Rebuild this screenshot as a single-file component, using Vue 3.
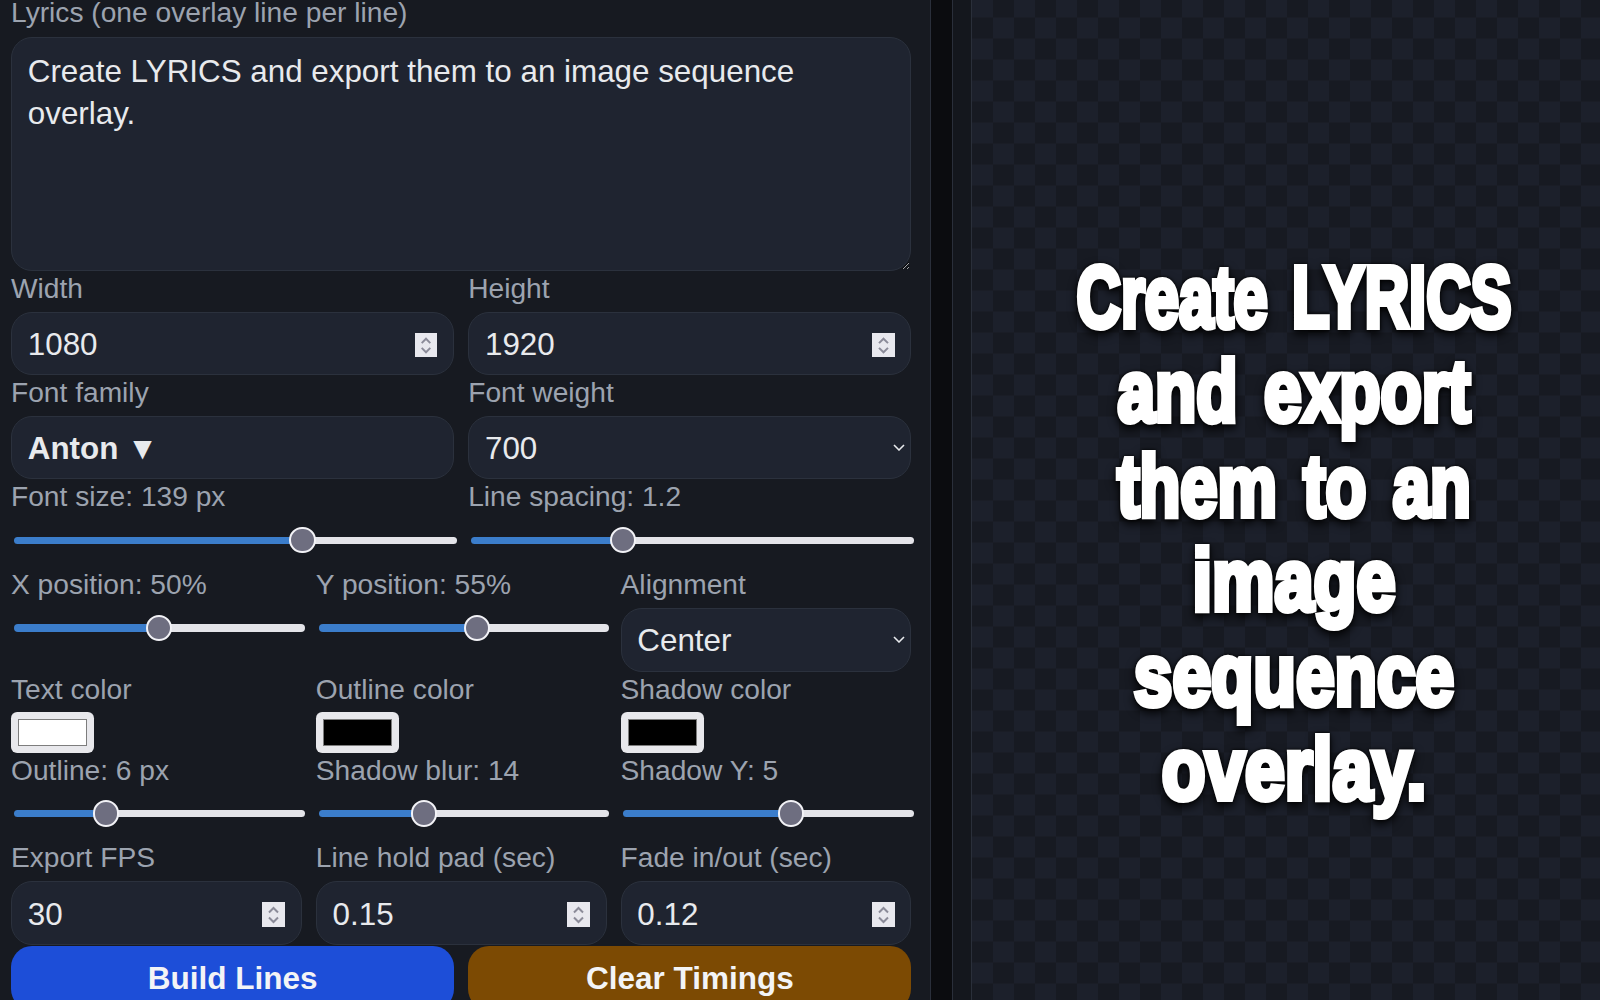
<script setup>
import { ref } from 'vue'

const lyrics = ref('Create LYRICS and export them to an image sequence overlay.')

const previewLines = [
  { text: 'Create LYRICS', scale: 0.706 },
  { text: 'and export', scale: 0.776 },
  { text: 'them to an', scale: 0.769 },
  { text: 'image', scale: 0.808 },
  { text: 'sequence', scale: 0.798 },
  { text: 'overlay.', scale: 0.821 }
]

const fill = (value, min, max) => ({ '--frac': (value - min) / (max - min) })
</script>

<template>
  <div class="app">
    <aside class="panel">
      <div class="controls">
        <label class="field">
          <span class="label first">Lyrics (one overlay line per line)</span>
          <textarea class="box lyrics" v-model="lyrics"></textarea>
        </label>

        <div class="row two">
          <label class="field">
            <span class="label">Width</span>
            <input class="box" type="number" value="1080" />
          </label>
          <label class="field">
            <span class="label">Height</span>
            <input class="box" type="number" value="1920" />
          </label>
          <div class="field">
            <span class="label">Font family</span>
            <button class="box font-btn" type="button">Anton ▼</button>
          </div>
          <label class="field">
            <span class="label">Font weight</span>
            <select class="box">
              <option>700</option>
            </select>
          </label>
          <label class="field">
            <span class="label">Font size: 139 px</span>
            <input class="range" type="range" min="20" max="200" value="139" :style="fill(139, 20, 200)" />
          </label>
          <label class="field">
            <span class="label">Line spacing: 1.2</span>
            <input class="range" type="range" min="0.8" max="2" step="0.05" value="1.2" :style="fill(1.2, 0.8, 2)" />
          </label>
        </div>

        <div class="row three">
          <label class="field">
            <span class="label">X position: 50%</span>
            <input class="range" type="range" min="0" max="100" value="50" :style="fill(50, 0, 100)" />
          </label>
          <label class="field">
            <span class="label">Y position: 55%</span>
            <input class="range" type="range" min="0" max="100" value="55" :style="fill(55, 0, 100)" />
          </label>
          <label class="field">
            <span class="label">Alignment</span>
            <select class="box">
              <option>Center</option>
            </select>
          </label>
          <label class="field">
            <span class="label">Text color</span>
            <input class="swatch" type="color" value="#ffffff" />
          </label>
          <label class="field">
            <span class="label">Outline color</span>
            <input class="swatch" type="color" value="#000000" />
          </label>
          <label class="field">
            <span class="label">Shadow color</span>
            <input class="swatch" type="color" value="#000000" />
          </label>
          <label class="field">
            <span class="label">Outline: 6 px</span>
            <input class="range" type="range" min="0" max="20" value="6" :style="fill(6, 0, 20)" />
          </label>
          <label class="field">
            <span class="label">Shadow blur: 14</span>
            <input class="range" type="range" min="0" max="40" value="14" :style="fill(14, 0, 40)" />
          </label>
          <label class="field">
            <span class="label">Shadow Y: 5</span>
            <input class="range" type="range" min="-30" max="30" value="5" :style="fill(5, -30, 30)" />
          </label>
          <label class="field">
            <span class="label">Export FPS</span>
            <input class="box" type="number" value="30" />
          </label>
          <label class="field">
            <span class="label">Line hold pad (sec)</span>
            <input class="box" type="number" step="0.01" value="0.15" />
          </label>
          <label class="field">
            <span class="label">Fade in/out (sec)</span>
            <input class="box" type="number" step="0.01" value="0.12" />
          </label>
        </div>

        <div class="row two actions">
          <button class="action build" type="button">Build Lines</button>
          <button class="action clear" type="button">Clear Timings</button>
        </div>
      </div>
    </aside>

    <div class="gutter"></div>
    <div class="rail"></div>

    <main class="stage">
      <div class="lyric-block">
        <div
          v-for="line in previewLines"
          :key="line.text"
          class="lyric-line"
          :style="{ transform: `scaleX(${line.scale})` }"
        >{{ line.text }}</div>
      </div>
    </main>
  </div>
</template>

<style>
html, body { margin: 0; background: #0b0c0f; }
</style>

<style scoped>
.app {
  display: flex;
  height: 1000px;
  overflow: hidden;
  background: #0b0c0f;
  font-family: "Liberation Sans", Arial, sans-serif;
}
.panel {
  width: 931px;
  flex: none;
  overflow: hidden;
  box-sizing: border-box;
  background: #171a21;
  border-right: 1px solid #2a2f3a;
}
.controls {
  zoom: 1.75;
  width: 514.500px;
  margin-top: -2px;
  margin-left: 6.300px;
}
.row { display: grid; column-gap: 8px; }
.two { grid-template-columns: 1fr 1fr; }
.three { grid-template-columns: 1fr 1fr 1fr; }
.field { display: block; min-width: 0; }
.label {
  display: block;
  height: 23.300px;
  line-height: 20px;
  font-size: 16.100px;
  color: #9ca3af;
  white-space: nowrap;
}
.label.first { line-height: 18px; }
.box {
  display: block;
  width: 100%;
  height: 36.300px;
  box-sizing: border-box;
  padding: 1.200px 9px 0;
  background: #1f2430;
  border: 1px solid #2b313d;
  border-radius: 12px;
  color: #e8eaed;
  font: 17.920px/24px "Liberation Sans", Arial, sans-serif;
  outline: none;
}
.box[type="number"] { padding-top: 1.800px; }
.box::-webkit-inner-spin-button {
  -webkit-appearance: none;
  appearance: none;
  opacity: 1;
  width: 13px;
  height: 14px;
  margin-top: 3.200px;
  background: #e8e8ee url("data:image/svg+xml,%3Csvg xmlns='http://www.w3.org/2000/svg' viewBox='0 0 23 24'%3E%3Cpath d='M7 10 11.500 5.500 16 10M7 15 11.500 19.500 16 15' fill='none' stroke='%238b8b99' stroke-width='2'/%3E%3C/svg%3E") center / 100% 100% no-repeat;
}
select.box {
  appearance: none;
  -webkit-appearance: none;
  background-image: url("data:image/svg+xml,%3Csvg xmlns='http://www.w3.org/2000/svg' viewBox='0 0 12 7'%3E%3Cpath d='M1 1 6 6 11 1' fill='none' stroke='%23e8eaed' stroke-width='1.600'/%3E%3C/svg%3E");
  background-repeat: no-repeat;
  background-position: right 3.300px center;
  background-size: 6.800px 4px;
}
.lyrics {
  height: 133.500px;
  padding: 7px 9px;
  resize: vertical;
}
.font-btn {
  text-align: left;
  font-weight: 700;
}
.range {
  -webkit-appearance: none;
  appearance: none;
  display: block;
  width: 100%;
  height: 16px;
  margin: 3.500px 2px 7.400px 1.600px;
  background: transparent;
}
.range::-webkit-slider-runnable-track {
  height: 4.400px;
  border-radius: 3px;
  background: linear-gradient(
    to right,
    #3b7dcb calc(7.500px + var(--frac) * (100% - 15px)),
    #e4e4e9 0
  );
}
.range::-webkit-slider-thumb {
  -webkit-appearance: none;
  appearance: none;
  box-sizing: border-box;
  width: 15px;
  height: 15px;
  margin-top: -5.300px;
  border: 1.200px solid #f2f2f6;
  border-radius: 50%;
  background: #6e6e80;
}
.swatch {
  -webkit-appearance: none;
  appearance: none;
  display: block;
  box-sizing: border-box;
  width: 47.500px;
  height: 23px;
  padding: 3.700px 4px;
  border: none;
  border-radius: 3.500px;
  background: #e8e8ec;
}
.swatch::-webkit-color-swatch-wrapper { padding: 0; }
.swatch::-webkit-color-swatch {
  border: 0.700px solid #7d7d7d;
  border-radius: 0;
}
.action {
  height: 36.500px;
  margin-top: 1px;
  border: none;
  border-radius: 12px;
  color: #f3f4f6;
  font: 700 18px "Liberation Sans", Arial, sans-serif;
}
.build { background: #1d4ed8; }
.clear { background: #7c4a03; }

.gutter {
  width: 21px;
  flex: none;
  background: #0b0c0f;
  border-right: 1px solid #2a2f3a;
}
.rail {
  width: 18px;
  flex: none;
  background: #14171d;
  border-right: 1px solid #2a2f3a;
}
.stage {
  flex: 1;
  display: flex;
  align-items: center;
  justify-content: center;
  padding-left: 14px;
  background-color: #171a22;
  background-image: conic-gradient(#1c202b 25%, transparent 0 50%, #1c202b 0 75%, transparent 0);
  background-size: 42px 42px;
  background-position: -21px -3.500px;
}
.lyric-block {
  margin-top: 66px;
  text-align: center;
  white-space: nowrap;
  color: #fff;
  word-spacing: 10px;
  font: 700 87px/94.500px "Liberation Sans Narrow", "Liberation Sans", sans-serif;
  -webkit-text-stroke: 6px #fff;
  filter: drop-shadow(0 0 1.500px #000) drop-shadow(0 4px 4px rgba(0, 0, 0, 0.85));
}
</style>
